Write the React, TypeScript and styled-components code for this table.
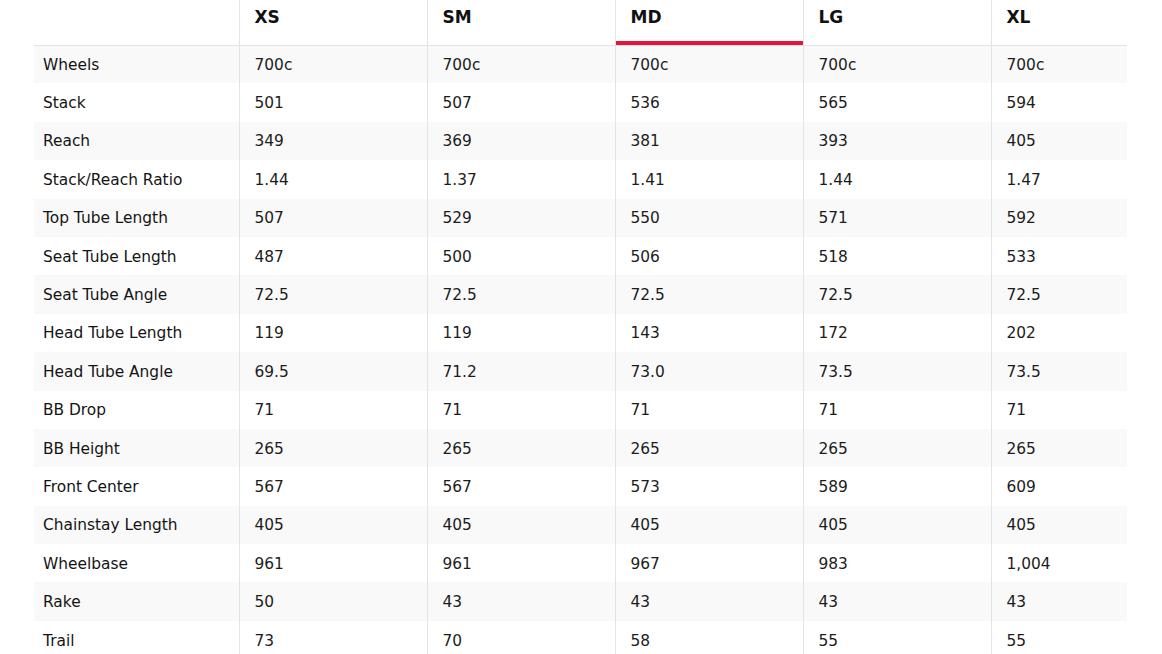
import React from "react";
import styled, { createGlobalStyle } from "styled-components";

const Global = createGlobalStyle`
  html, body { margin: 0; padding: 0; background: #fff; }
  body { font-family: "DejaVu Sans", "Open Sans", sans-serif; color: #1c1c1c; }
`;

const Wrap = styled.div`
  padding: 0 35px 0 34px;
`;

const Table = styled.table`
  width: 1093px;
  border-collapse: collapse;
  table-layout: fixed;
  font-size: 15.4px;
`;

const Col = styled.col<{ $w: number }>`
  width: ${(p) => p.$w}px;
`;

const HeadCell = styled.th<{ $active?: boolean; $first?: boolean }>`
  height: 45px;
  padding: 7px 0 0 15px;
  text-align: left;
  vertical-align: top;
  box-sizing: border-box;
  font-size: 17px;
  font-weight: 700;
  color: #111;
  border-left: ${(p) => (p.$first ? "none" : "1px solid #e3e3e3")};
  border-bottom: 1px solid #e3e3e3;
  box-shadow: ${(p) => (p.$active ? "inset 0 -4px 0 #e8133d" : "none")};
`;

const Row = styled.tr<{ $striped: boolean }>`
  height: 38.4px;
  background: ${(p) => (p.$striped ? "#f9f9f9" : "#fff")};
`;

const LabelCell = styled.td`
  padding: 1px 0 0 9px;
  color: #141414;
`;

const ValueCell = styled.td`
  padding: 1px 0 0 15px;
  border-left: 1px solid #e3e3e3;
  color: #1c1c1c;
`;

const sizes = ["XS", "SM", "MD", "LG", "XL"];
const widths = [205, 188, 188, 188, 188, 136];

const rows: [string, string[]][] = [
  ["Wheels", ["700c", "700c", "700c", "700c", "700c"]],
  ["Stack", ["501", "507", "536", "565", "594"]],
  ["Reach", ["349", "369", "381", "393", "405"]],
  ["Stack/Reach Ratio", ["1.44", "1.37", "1.41", "1.44", "1.47"]],
  ["Top Tube Length", ["507", "529", "550", "571", "592"]],
  ["Seat Tube Length", ["487", "500", "506", "518", "533"]],
  ["Seat Tube Angle", ["72.5", "72.5", "72.5", "72.5", "72.5"]],
  ["Head Tube Length", ["119", "119", "143", "172", "202"]],
  ["Head Tube Angle", ["69.5", "71.2", "73.0", "73.5", "73.5"]],
  ["BB Drop", ["71", "71", "71", "71", "71"]],
  ["BB Height", ["265", "265", "265", "265", "265"]],
  ["Front Center", ["567", "567", "573", "589", "609"]],
  ["Chainstay Length", ["405", "405", "405", "405", "405"]],
  ["Wheelbase", ["961", "961", "967", "983", "1,004"]],
  ["Rake", ["50", "43", "43", "43", "43"]],
  ["Trail", ["73", "70", "58", "55", "55"]],
];

export default function App() {
  return (
    <Wrap>
      <Global />
      <Table>
        <colgroup>
          {widths.map((w, i) => (
            <Col key={i} $w={w} />
          ))}
        </colgroup>
        <thead>
          <tr>
            <HeadCell $first />
            {sizes.map((s) => (
              <HeadCell key={s} $active={s === "MD"}>
                {s}
              </HeadCell>
            ))}
          </tr>
        </thead>
        <tbody>
          {rows.map(([label, vals], i) => (
            <Row key={label} $striped={i % 2 === 0}>
              <LabelCell>{label}</LabelCell>
              {vals.map((v, j) => (
                <ValueCell key={j}>{v}</ValueCell>
              ))}
            </Row>
          ))}
        </tbody>
      </Table>
    </Wrap>
  );
}
